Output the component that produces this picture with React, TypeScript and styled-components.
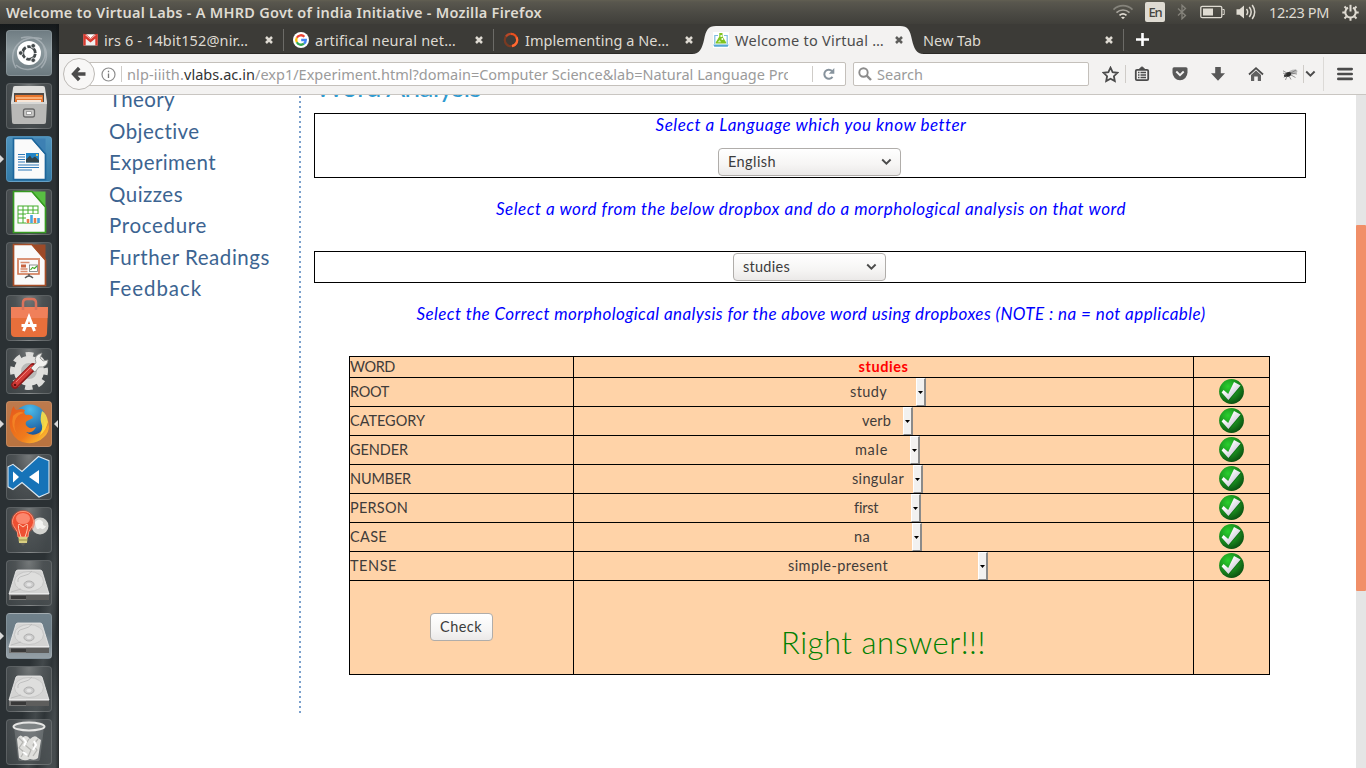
import React, { useLayoutEffect, useRef, useState } from 'react';
import styled, { createGlobalStyle, css } from 'styled-components';

const uiFont = "'Noto Sans', 'Open Sans', sans-serif";
const pageFont = "Lato, 'Open Sans', sans-serif";

const GlobalStyle = createGlobalStyle`
  * { box-sizing: border-box; }
  body { margin: 0; background: #fff; overflow: hidden; }
  svg { display: block; flex: none; }
`;

/* ---------- text that is tracked to a fixed measure ---------- */

const Tracked = styled.span`
  display: inline-block;
  white-space: pre;
  flex: none;
`;

function Fit({ w, children }: { w: number; children: string }) {
  const ref = useRef<HTMLSpanElement>(null);
  const [spacing, setSpacing] = useState(0);
  useLayoutEffect(() => {
    if (ref.current) {
      const natural = ref.current.getBoundingClientRect().width;
      setSpacing((w - natural) / children.length);
    }
  }, [w, children]);
  return (
    <Tracked ref={ref} style={{ letterSpacing: spacing }}>
      {children}
    </Tracked>
  );
}

/* ---------- desktop shell ---------- */

const Desktop = styled.div`
  width: 1366px;
  height: 768px;
  display: grid;
  grid-template: 24px 744px / 59px 1307px;
  overflow: hidden;
`;

const TitleBar = styled.header`
  grid-column: 1 / 3;
  display: flex;
  align-items: center;
  justify-content: space-between;
  padding: 0 7px 0 6px;
  background: linear-gradient(#625f52 0, #59574e 2px, #4a4943 14px, #403f3a 24px);
  color: #dfdbd2;
  font: 600 14.5px/24px ${uiFont};
`;

const Indicators = styled.div`
  display: flex;
  align-items: center;
  height: 24px;
  font-weight: 400;
`;

const LangBadge = styled.span`
  width: 20px;
  height: 20px;
  margin: 0 12px 0 11px;
  border-radius: 2px;
  background: #dfdbd2;
  color: #45443e;
  font: 500 13px/21px ${uiFont};
  display: flex;
  justify-content: center;
`;

const Clock = styled.span`
  margin: 0 13px 0 12px;
`;

/* ---------- launcher ---------- */

const Launcher = styled.nav`
  display: flex;
  flex-direction: column;
  gap: 7px;
  padding: 6px 0 0 0;
  overflow: hidden;
  background:
    linear-gradient(90deg, transparent 55px, rgba(15, 17, 18, 0.55) 59px),
    linear-gradient(#15191b 0, rgba(21, 25, 27, 0) 40px),
    linear-gradient(98deg, rgba(0, 0, 0, 0) 60%, rgba(110, 116, 118, 0.35) 72%, rgba(60, 66, 68, 0.2) 80%, rgba(120, 126, 128, 0.35) 90%) 0 380px / 59px 364px no-repeat,
    #2b3134;
`;

const LauncherSlot = styled.div`
  display: grid;
  grid-template-columns: 6px 46px 7px;
  height: 46px;
  flex: none;
  align-items: center;
`;

const Tile = styled.div<{ $bg?: string }>`
  width: 46px;
  height: 46px;
  border-radius: 4px;
  overflow: hidden;
  grid-column: 2;
  border: 1px solid rgba(255, 255, 255, 0.14);
  background: ${(p) =>
    p.$bg || 'radial-gradient(ellipse at 50% 0, #75797a 0, rgba(85, 90, 92, 0.8) 45%, rgba(76, 82, 84, 0.55) 100%)'};
  display: flex;
  align-items: center;
  justify-content: center;
`;

const Pip = styled.i<{ $side: 'left' | 'right' }>`
  width: 0;
  height: 0;
  border: 4px solid transparent;
  ${(p) =>
    p.$side === 'left'
      ? css`border-left-color: #d8d8d8; border-right-width: 0; grid-column: 1; grid-row: 1;`
      : css`border-right-color: #d8d8d8; border-left-width: 0; grid-column: 3; grid-row: 1; justify-self: end; margin-right: 1px;`}
`;

/* ---------- browser ---------- */

const Browser = styled.main`
  display: grid;
  grid-template-rows: 30px 41px 673px;
  min-width: 0;
`;

const TabStrip = styled.div`
  display: flex;
  background: #3c3b37;
  border-bottom: 1px solid #2b2a27;
  height: 30px;
  padding-left: 15px;
`;

const TabBox = styled.div<{ $active?: boolean; $line?: boolean }>`
  position: relative;
  flex: none;
  width: 210px;
  height: 30px;
  display: flex;
  align-items: center;
  justify-content: space-between;
  padding: 1px 10px 0 9px;
  color: ${(p) => (p.$active ? '#4c4c4c' : '#dedad2')};
  font: 400 14.5px/26px ${uiFont};
  & > * { z-index: 1; }
  ${(p) =>
    p.$line &&
    css`
      &::after {
        content: '';
        position: absolute;
        right: 0;
        top: 5px;
        width: 1px;
        height: 22px;
        background: #6c6b67;
      }
    `}
`;

const TabShape = styled.svg`
  position: absolute;
  left: -12px;
  top: 2px;
  z-index: 0;
`;

const TabTitle = styled.div`
  display: flex;
  align-items: center;
  gap: 6px;
  height: 26px;
`;

const NewTab = styled.div`
  width: 36px;
  padding-top: 2px;
  display: flex;
  align-items: center;
  justify-content: center;
`;

const NavBar = styled.div`
  display: flex;
  align-items: center;
  height: 41px;
  padding-left: 4px;
  background: #f3f2f1;
  border-bottom: 1px solid #c9c6c2;
`;

const BackButton = styled.div`
  width: 32px;
  height: 32px;
  border: 1px solid #bdbab6;
  border-radius: 50%;
  background: #f8f7f6;
  display: flex;
  align-items: center;
  justify-content: center;
  z-index: 1;
  flex: none;
`;

const Field = styled.div<{ $w: number; $pad: number }>`
  width: ${(p) => p.$w}px;
  padding-left: ${(p) => p.$pad}px;
  height: 24px;
  flex: none;
  display: flex;
  align-items: center;
  border: 1px solid #c4c0bb;
  border-radius: 2px;
  background: #fff;
  color: #9b9b9b;
  font: 400 14.5px/22px ${uiFont};
`;

const UrlField = styled(Field)`
  margin-left: -8px;
  margin-right: 7px;
`;

const UrlText = styled.div`
  display: flex;
  width: 661px;
  overflow: hidden;
  b { font-weight: 400; color: #333; }
`;

const Rule = styled.i<{ $h: number; $m: string; $c?: string }>`
  width: 1px;
  height: ${(p) => p.$h}px;
  margin: ${(p) => p.$m};
  background: ${(p) => p.$c || '#cfccc8'};
  flex: none;
`;

const ToolSlot = styled.div<{ $w: number }>`
  width: ${(p) => p.$w}px;
  display: flex;
  justify-content: center;
  flex: none;
`;

/* ---------- page ---------- */

const Page = styled.div`
  display: grid;
  grid-template-columns: 240px 1057px 10px;
  height: 673px;
  overflow: hidden;
  background: #fff;
  font-family: ${pageFont};
`;

const SideNav = styled.aside`
  height: 619px;
  display: flex;
  flex-direction: column;
  padding-left: 50px;
  margin-top: -11px;
  color: #3c6491;
  font-size: 20.5px;
  line-height: 31.5px;
`;

const SideLink = styled.a`
  display: block;
  height: 31.5px;
  flex: none;
`;

const Main = styled.section`
  display: flex;
  flex-direction: column;
  width: 1007px;
  height: 619px;
  padding-left: 15px;
  background: repeating-linear-gradient(#7ba0cc 0, #7ba0cc 2px, transparent 2px, transparent 5px) 0 1px / 2px 619px no-repeat;
`;

const Heading = styled.h1`
  margin: -25px 0 10px 1px;
  height: 33px;
  color: #2f9ad0;
  font-size: 28px;
  font-weight: 400;
  line-height: 33px;
`;

const Panel = styled.div<{ $h: number }>`
  width: 992px;
  height: ${(p) => p.$h}px;
  flex: none;
  display: flex;
  flex-direction: column;
  align-items: center;
  justify-content: flex-end;
  padding: 0 1px 1px 0;
  border: 1px solid #000;
`;

const Prompt = styled.p<{ $m?: string }>`
  margin: ${(p) => p.$m || 0};
  height: 22px;
  flex: none;
  text-align: center;
  color: #0000ff;
  font-size: 17px;
  font-style: italic;
  line-height: 22px;
`;

const Control = styled.div<{ $w: number }>`
  width: ${(p) => p.$w}px;
  height: 28px;
  flex: none;
  display: flex;
  align-items: center;
  justify-content: space-between;
  padding: 0 8px 0 9px;
  border: 1px solid #b0adaa;
  border-radius: 4px;
  background: linear-gradient(#fff, #f6f5f4 60%, #ebe9e8);
  color: #3c3c3c;
  font-size: 14.5px;
  line-height: 26px;
`;

const Sheet = styled.div`
  width: 921px;
  margin: 31px 0 0 35px;
  flex: none;
  display: grid;
  grid-template-columns: 223px 619px 75px;
  grid-template-rows: 20px repeat(7, 28px) 93px;
  gap: 1px;
  padding: 1px;
  background: #000;
  color: #3f3c3a;
  font-size: 14.5px;
  line-height: 20px;
`;

const Cell = styled.div<{ $center?: boolean }>`
  display: flex;
  align-items: center;
  justify-content: ${(p) => (p.$center ? 'center' : 'flex-start')};
  background: #ffd3a8;
`;

const MarkCell = styled(Cell)`
  align-items: flex-start;
  padding: 1px 0 0 25px;
`;

const CheckCell = styled(Cell)`
  padding-bottom: 1px;
`;

const Answer = styled.strong`
  color: #ff0000;
  font-weight: 700;
`;

const FlatSelect = styled.div<{ $w: number; $pad: number }>`
  width: ${(p) => p.$w}px;
  height: 28px;
  display: flex;
  align-items: center;
  justify-content: space-between;
  padding-left: ${(p) => p.$pad}px;
`;

const FlatArrow = styled.span`
  width: 10px;
  height: 28px;
  display: flex;
  align-items: center;
  justify-content: flex-end;
  padding-right: 1px;
  background: #f2f1f0;
  border: 1px solid #fff;
  border-right: 2px solid #8b8a89;
  border-bottom: 1px solid #8b8a89;
`;

const Result = styled.div`
  padding-top: 29px;
  color: #008000;
  font-size: 31px;
  font-weight: 300;
  line-height: 36px;
`;

const ScrollTrack = styled.div`
  background: #e5e5e5;
  padding-top: 130px;
`;

const ScrollThumb = styled.div`
  height: 366px;
  background: #f18f68;
  border-radius: 1px;
`;

/* ---------- small icons ---------- */

const CloseIcon = ({ color }: { color: string }) => (
  <svg width="10" height="10" viewBox="0 0 10 10">
    <path d="M2 2 8 8M8 2 2 8" stroke={color} strokeWidth="2.5" />
  </svg>
);

const Chevron = () => (
  <svg width="11" height="8" viewBox="0 0 11 8">
    <path d="m1.2 1.5 4.2 4.2 4.2-4.2" fill="none" stroke="#4b4b4b" strokeWidth="1.9" />
  </svg>
);

const Tick = () => (
  <svg width="25" height="25" viewBox="0 0 25 25">
    <defs>
      <radialGradient id="ball" cx=".36" cy=".3" r=".75">
        <stop offset="0" stopColor="#2bd02e" />
        <stop offset=".5" stopColor="#1b9420" />
        <stop offset="1" stopColor="#0a4d10" />
      </radialGradient>
      <linearGradient id="silver" x2="1" y2="1">
        <stop offset=".3" stopColor="#fff" />
        <stop offset="1" stopColor="#b0abc4" />
      </linearGradient>
    </defs>
    <circle cx="12.500" cy="12.500" r="12.400" fill="url(#ball)" />
    <path d="m3 14.600 2-2 4.500 3.500L15.600 4.400 22 7.200 10 21.600Z" fill="#0b5e12" opacity=".7" />
    <path d="m2.600 13.400 2-2.300 4.600 4L15 3l6.600 3.600L9.400 21Z" fill="url(#silver)" />
  </svg>
);

const GmailIcon = () => (
  <svg width="15" height="16" viewBox="0 0 15 16">
    <rect x=".5" y="2.5" width="14" height="11" fill="#eee" />
    <path d="M1.5 13.5V4l6 5 6-5v9.5" fill="none" stroke="#d93a2f" strokeWidth="2.4" />
    <path d="M1 2.5h2l4.5 4 4.5-4h2" fill="#fff" stroke="#d93a2f" strokeWidth=".8" />
  </svg>
);

const GoogleIcon = () => (
  <svg width="16" height="16" viewBox="0 0 16 16">
    <circle cx="8" cy="8" r="8" fill="#fff" />
    <g fill="none" strokeWidth="2.3">
      <path d="M11.4 4.7A4.8 4.8 0 0 0 3.8 5.7" stroke="#ea4335" />
      <path d="M3.8 5.7a4.8 4.8 0 0 0 0 4.6" stroke="#fbbc05" />
      <path d="M3.8 10.3a4.8 4.8 0 0 0 7.2 1.4" stroke="#34a853" />
      <path d="M11 11.7A4.6 4.6 0 0 0 12.8 8H8.2" stroke="#4285f4" />
    </g>
  </svg>
);

const SpinnerIcon = () => (
  <svg width="16" height="16" viewBox="0 0 16 16" fill="none" strokeWidth="2.2">
    <circle cx="8" cy="8" r="6.2" stroke="#7a3a22" />
    <path d="M8 1.8a6.2 6.2 0 0 1 1 12.3" stroke="#e9501f" />
    <path d="M3 4.3a6.2 6.2 0 0 1 5-2.5" stroke="#b7492a" />
    <path d="M13.6 5.4A6.2 6.2 0 0 1 9 14.1" stroke="#ff6a33" />
  </svg>
);

const LabIcon = () => (
  <svg width="16" height="16" viewBox="0 0 16 16">
    <rect width="16" height="16" fill="#fff" />
    <path d="M1.800 12V3.500H5M11 3.500h3.200V12" fill="none" stroke="#7dbde0" strokeWidth="1.200" />
    <path d="M6.300 1h3.200v3.500l3.700 6q.3 1-.8 1H3.400q-1 0-.7-1l3.600-6Z" fill="#7fc41f" />
    <circle cx="8.200" cy="4" r=".9" fill="#fff" />
    <circle cx="9.300" cy="7" r="1" fill="#fff" />
    <path d="M4.500 10.300 6.600 8l1.600 2.300Z" fill="#d9efb4" />
    <path d="M.3 12.500h15.400l-1 2.300H1.300Z" fill="#55a7d3" />
  </svg>
);

const WifiIcon = () => (
  <svg width="22" height="18" viewBox="0 0 22 18" fill="none" strokeWidth="1.7">
    <path d="M1.5 6.6C7 1.4 15 1.4 20.500 6.600" stroke="#85837b" />
    <path d="M4.500 9.600c3.800-3.500 9.200-3.500 13 0" stroke="#a9a69e" />
    <path d="M7.500 12.400c2.200-1.900 4.800-1.900 7 0" stroke="#dfdbd2" />
    <path d="M9 14.300 11 16.300l2-2c-1.200-.8-2.800-.8-4 0Z" fill="#dfdbd2" stroke="none" />
  </svg>
);

const BluetoothIcon = () => (
  <svg width="10" height="16" viewBox="0 0 10 16">
    <path d="m1 4.500 7.500 7L5 14.800V1.200L8.500 4.500 1 11.500" fill="none" stroke="#85837b" strokeWidth="1.300" />
  </svg>
);

const BatteryIcon = () => (
  <svg width="25" height="14" viewBox="0 0 25 14">
    <rect x=".8" y="1.300" width="21" height="11.400" rx="1.500" fill="none" stroke="#dfdbd2" strokeWidth="1.300" />
    <path d="M22.500 4.500h1.700v5h-1.700" fill="none" stroke="#dfdbd2" />
    <rect x="3" y="3.500" width="10" height="7" fill="#dfdbd2" />
  </svg>
);

const VolumeIcon = () => (
  <svg width="21" height="18" viewBox="0 0 21 18">
    <path d="M.5 6.200H3.500L8 2.500v13L3.500 11.800H.500Z" fill="#dfdbd2" />
    <g fill="none" stroke="#dfdbd2" strokeWidth="1.500">
      <path d="M10.500 6q2.400 3 0 6" />
      <path d="M13.300 4q3.800 5 0 10" />
      <path d="M16.200 2q5 7 0 14" />
    </g>
  </svg>
);

const GearIcon = () => (
  <svg width="17" height="17" viewBox="0 0 17 17" fill="none" stroke="#dfdbd2">
    <path d="M6 3.700A5.200 5.200 0 1 0 11 3.700" strokeWidth="2" />
    <path d="M8.500.8v6.700" strokeWidth="2" />
    <path d="M2.500 2.500 4.600 4.600M14.500 2.500 12.400 4.600M.3 8.500h3M13.700 8.500h3M2.500 14.500l2.100-2.100M14.500 14.500l-2.100-2.100M8.500 13.700v3" strokeWidth="2" />
  </svg>
);

const BackIcon = () => (
  <svg width="16" height="16" viewBox="0 0 16 16">
    <path d="M8.200 2 2.600 8l5.600 6M3.500 8h11" fill="none" stroke="#4b4b4b" strokeWidth="3.500" />
  </svg>
);

const InfoIcon = () => (
  <svg width="15" height="15" viewBox="0 0 15 15">
    <circle cx="7.500" cy="7.500" r="6.500" fill="none" stroke="#8d8d8d" strokeWidth="1.200" />
    <path d="M7.500 6.500v4.500M7.500 3.800v1.500" stroke="#777" strokeWidth="1.300" />
  </svg>
);

const ReloadIcon = () => (
  <svg width="14" height="14" viewBox="0 0 14 14">
    <path d="M10.500 9.800A4.500 4.500 0 1 1 10 4" fill="none" stroke="#87939d" strokeWidth="2" />
    <path d="M12.300 1v5.800H6.800Z" fill="#87939d" />
  </svg>
);

const SearchIcon = () => (
  <svg width="14" height="14" viewBox="0 0 14 14" fill="none" stroke="#8c8c8c">
    <circle cx="5.500" cy="5.500" r="4.200" strokeWidth="1.900" />
    <path d="m8.700 8.700 4.300 4.300" strokeWidth="2.400" />
  </svg>
);

const StarIcon = () => (
  <svg width="17" height="17" viewBox="0 0 17 17">
    <path d="m8.500 1.700 2.100 4.500 4.900.6-3.600 3.400.9 4.900-4.300-2.400-4.300 2.400.9-4.900L1.500 6.800l4.900-.6Z" fill="none" stroke="#4b4b4b" strokeWidth="1.800" />
  </svg>
);

const ListIcon = () => (
  <svg width="16" height="16" viewBox="0 0 16 16">
    <path d="M5.500 3.500V2.800L8 .800l2.500 2v.7" fill="#4b4b4b" stroke="#4b4b4b" />
    <rect x="1.800" y="3.800" width="12.400" height="10.400" rx="1.200" fill="#f3f2f1" stroke="#4b4b4b" strokeWidth="1.800" />
    <path d="M4 6.500h1.500M4 9h1.500M4 11.500h1.500M6.500 6.500H12M6.500 9H12M6.500 11.500H12" stroke="#4b4b4b" strokeWidth="1.400" />
  </svg>
);

const PocketIcon = () => (
  <svg width="16" height="16" viewBox="0 0 16 16">
    <path d="M.5 2.800Q.5 1.200 2 1.200h12q1.500 0 1.500 1.600v3.700A7.500 7.800 0 0 1 .5 6.500Z" fill="#585858" />
    <path d="m4.300 5.500 3.700 3.600 3.700-3.600" fill="none" stroke="#f3f2f1" strokeWidth="1.900" />
  </svg>
);

const DownloadIcon = () => (
  <svg width="16" height="16" viewBox="0 0 16 16">
    <path d="M5.200 1h5.600v6.200H15L8 14.800 1 7.200h4.200Z" fill="#585858" />
  </svg>
);

const HomeIcon = () => (
  <svg width="16" height="16" viewBox="0 0 16 16">
    <path d="m1 8.500 7-6.300 7 6.300" fill="none" stroke="#4b4b4b" strokeWidth="1.800" />
    <path d="M3 9 8 4.600 13 9v6H9.800v-4.500H6.200V15H3Z" fill="#616161" />
  </svg>
);

const FlyIcon = () => (
  <svg width="17" height="13" viewBox="0 0 17 13">
    <ellipse cx="11" cy="4" rx="4.500" ry="2.300" fill="#b5b5b5" transform="rotate(-15 11 4)" />
    <path d="m8 5.500 6-3.500M8 5l7 1" stroke="#777" strokeWidth=".8" />
    <ellipse cx="6" cy="6.500" rx="3.300" ry="2.300" fill="#2d2d2d" transform="rotate(-20 6 6.500)" />
    <path d="M1 5l3 1.500L2 9.500M1 2.800 5 5M5 8l-1.500 4M7 8l2 3.500M9 7l4.500 2.500" fill="none" stroke="#888" strokeWidth=".9" />
    <circle cx="3.200" cy="7.700" r="1.300" fill="#3f3f3f" />
  </svg>
);

const MenuIcon = () => (
  <svg width="16" height="14" viewBox="0 0 16 14">
    <path d="M1.300 2.100h13.400M1.300 7h13.400M1.300 11.900h13.400" stroke="#4b4b4b" strokeWidth="2.600" strokeLinecap="round" />
  </svg>
);

/* ---------- launcher artwork ---------- */

const Art = ({ children }: { children: React.ReactNode }) => (
  <svg width="46" height="46" viewBox="0 0 46 46">
    {children}
  </svg>
);

const DashArt = () => (
  <Art>
    <path d="M10 38C0 22 14 3 36 9M15 8C34 2 49 23 35 38M37 15c9 18-13 32-27 20" fill="none" stroke="#bac2c6" strokeWidth="1.500" opacity=".6" />
    <circle cx="23" cy="23" r="12" fill="#fff" />
    <circle cx="23" cy="23" r="6.300" fill="none" stroke="#444a4c" strokeWidth="2.800" strokeDasharray="11.600 1.600" strokeDashoffset="-.8" />
    <g fill="#444a4c" stroke="#fff" strokeWidth=".8">
      <circle cx="14.700" cy="23" r="2.300" />
      <circle cx="27.200" cy="15.800" r="2.300" />
      <circle cx="27.200" cy="30.200" r="2.300" />
    </g>
  </Art>
);

const FilesArt = () => (
  <Art>
    <path d="M7 5q0-2 2-2h28q2 0 2 2l2 14H5Z" fill="#dededc" />
    <path d="M8 10h30v10H8Z" fill="#514b47" />
    <path d="M9 13q0-1 1-1h26q1 0 1 1v7H9Z" fill="#e6752d" />
    <path d="M10 15h26" stroke="#ffc38f" strokeWidth="1.500" />
    <path d="M11 17h24v2H11Z" fill="#f7e6d8" />
    <path d="M5 19h36l-1 20q0 2-2 2H8q-2 0-2-2Z" fill="#b9b9b7" />
    <path d="M5 19h36v2H5Z" fill="#d8d8d6" />
    <rect x="17.500" y="26" width="11" height="8" rx="2" fill="#c7c7c5" stroke="#696969" strokeWidth="1.300" />
    <rect x="20.500" y="28.700" width="5" height="2.800" fill="#fafafa" stroke="#777" strokeWidth=".6" />
  </Art>
);

const DocShape = ({ color, fold }: { color: string; fold: string }) => (
  <>
    <path d="M7.500 2.500H26L39.500 18v25.500h-32Z" fill="#fafafa" stroke={color} strokeWidth="1.700" />
    <path d="M26 2.500h13.500V18Z" fill={fold} />
    <path d="M26 2.500 39.500 18" stroke={color} strokeWidth="1.200" />
  </>
);

const WriterArt = () => (
  <Art>
    <DocShape color="#1d669b" fold="#3d80b3" />
    <path d="M12 18.500h7M12 21h7M12 23.500h7M12 26h7M12 29h21M12 31.500h21M12 34h14" stroke="#2f79b7" strokeWidth="1.200" />
    <rect x="20" y="17" width="13" height="9.500" fill="#2384c6" />
    <path d="M20 26.500v-3l4-4 2 3 3-2 4 4v2Z" fill="#34444a" />
    <circle cx="31" cy="19" r="1.100" fill="#ffd65c" />
  </Art>
);

const CalcArt = () => (
  <Art>
    <DocShape color="#369a20" fold="#58bf42" />
    <rect x="12" y="17" width="20" height="17" fill="#fff" stroke="#43ac2a" />
    <path d="M12 21h20M12 25h20M12 29h20M17 17v17M22 17v17M27 17v17" stroke="#43ac2a" />
    <rect x="20" y="25" width="14" height="9" fill="#fff" />
    <path d="M22 34v-4M29 34v-5" stroke="#e67b48" strokeWidth="2.600" />
    <path d="M25.500 34v-8M32.500 34v-5" stroke="#46a5e2" strokeWidth="2.600" />
  </Art>
);

const ImpressArt = () => (
  <Art>
    <DocShape color="#a64d26" fold="#9c4a28" />
    <path d="M11 17h23M12 18v14h21V18" fill="none" stroke="#d0724b" strokeWidth="1.600" />
    <path d="M14.500 20.500h9M14.500 27h7M14.500 29.500h7" stroke="#d88d6f" strokeWidth="1.300" />
    <path d="M15 24h5" stroke="#c86440" strokeWidth="3" />
    <rect x="23.500" y="23" width="8" height="6.500" fill="#fff" stroke="#777" strokeWidth=".8" />
    <path d="m24.500 28 2-2.500 2 1 2.500-2.500" fill="none" stroke="#43ac2a" strokeWidth="1.200" />
    <path d="M23 32v2M19 36q4-4 8 0" fill="none" stroke="#555" strokeWidth="1.500" />
  </Art>
);

const StoreArt = () => (
  <Art>
    <path d="M5 12h37l-1 26q0 4-4 4H9q-4 0-4-4Z" fill="#e86f3b" />
    <path d="M5 12h37l-.5 11H5Z" fill="#f0805a" />
    <path d="M17 15V8q0-4 4-4h5q4 0 4 4v7" fill="none" stroke="#d9735c" strokeWidth="2.500" />
    <path d="m17.500 36 5.500-14 5.500 14" fill="none" stroke="#fff" strokeWidth="3" />
    <path d="M15.500 30.500h15" stroke="#fff" strokeWidth="3" />
  </Art>
);

const SettingsArt = () => (
  <Art>
    <circle cx="23" cy="23" r="16.500" fill="none" stroke="#dcdcda" strokeWidth="5" strokeDasharray="7.500 5.460" strokeDashoffset="3.700" />
    <circle cx="23" cy="23" r="11.500" fill="#b9bab9" stroke="#e0e0de" strokeWidth="7" />
    <path d="M9 37 27 19" stroke="#8e1a1a" strokeWidth="7.500" strokeLinecap="round" />
    <path d="M9 36.500 26 19.500" stroke="#d33c38" strokeWidth="5" strokeLinecap="round" />
    <path d="M10 34 25 19" stroke="#ed8079" strokeWidth="1" />
    <path d="m25 20 5-5q-3-8 6-10l-2 5 3 3 5-1q-1 8-9 7l-4 5Z" fill="#f1f1ef" stroke="#8b8d8c" strokeWidth=".8" />
    <circle cx="9" cy="37" r="1.300" fill="#5f1212" />
  </Art>
);

const FirefoxArt = () => (
  <Art>
    <defs>
      <linearGradient id="fox" x2="1" y2="1">
        <stop offset="0" stopColor="#e5581c" />
        <stop offset=".6" stopColor="#f07b1c" />
        <stop offset="1" stopColor="#ffd33a" />
      </linearGradient>
      <radialGradient id="globe" cx=".5" cy=".15" r=".9">
        <stop offset="0" stopColor="#4bbbea" />
        <stop offset="1" stopColor="#12448b" />
      </radialGradient>
    </defs>
    <circle cx="24" cy="20" r="16.500" fill="url(#globe)" />
    <path d="M5 12q0-4 3-7 0 3 3 4 4-2 8 0-2 3 1 5 6-1 7 3l-6 3q-2 1-1 4 3 5 10 2-3 7-10 5 6 5 13 1 7-5 5-14 3 4 2 9 3-3 1-10 5 12-3 19-7 7-17 6Q10 41 5 30 2 21 5 12Z" fill="url(#fox)" />
    <path d="M36 10q5 3 6 11-2 9-9 14 5-7 2-14-1-4 1-11Z" fill="#ffdf42" opacity=".9" />
    <path d="M7 15q6-6 11-3-7 1-9 8-2 8 3 14-8-8-5-19Z" fill="#f58a27" opacity=".8" />
  </Art>
);

const CodeArt = () => (
  <Art>
    <path d="M32.500 2.500 43 6.700v32L33 43 16 28.500 7 35.500l-5-2.700v-20L7 10.300l9 7.200Z" fill="#1673b8" stroke="#dce8f1" strokeWidth="1.100" />
    <path d="M33 16v14l-10-7Z" fill="#fff" />
    <path d="M7 17.500v11l6-5.500Z" fill="#fff" />
  </Art>
);

const LampArt = () => (
  <Art>
    <circle cx="34" cy="19" r="8.500" fill="#d3d3cf" />
    <path d="M29 15q4-5 8 0-1 4 3 4-2 5-6 2-4 4-5-6Z" fill="#f3f3f0" />
    <circle cx="17" cy="15" r="12" fill="#f4492d" opacity=".45" />
    <path d="M17 4.500A10 10 0 0 1 25 21q-3 3-3 9H12q0-6-3-9A10 10 0 0 1 17 4.500Z" fill="#ee4f32" stroke="#ff9475" strokeWidth="1" />
    <path d="M15 30q-4-11-2-13l4 3 4-3q2 2-2 13" fill="none" stroke="#ffc8ae" />
    <ellipse cx="17" cy="11.500" rx="7" ry="5.500" fill="#ff9a83" opacity=".75" />
    <path d="M12.500 30h9l-.5 6h-8Z" fill="#d9cf82" />
    <path d="M12.500 33h9" stroke="#988f46" />
    <path d="M14 36h6l-3 3Z" fill="#5c5c58" />
  </Art>
);

const DriveArt = () => (
  <Art>
    <path d="M10 11q1-1 2-1h22q1 0 2 1l7 23H3Z" fill="#d4d4d3" stroke="#eee" strokeWidth=".8" />
    <path d="M3 34h40v6H3Z" fill="#777776" />
    <path d="M5 35.500h15v3.500H5Z" fill="#393939" />
    <path d="M20 34h23v6H20Z" fill="#5d5d5c" />
    <path d="M3 34h40" stroke="#f6f6f6" />
    <ellipse cx="23" cy="21.500" rx="14.500" ry="10" fill="#dededd" stroke="#bebebe" strokeWidth=".7" />
    <ellipse cx="23" cy="24.500" rx="5" ry="3.500" fill="#ccc" stroke="#a5a5a5" strokeWidth=".8" />
    <ellipse cx="23" cy="24.500" rx="2.500" ry="1.700" fill="#e4e4e4" />
    <path d="M26 11q-3 4-9 5t-5 6M5 32l10-3" fill="none" stroke="#b8b8b8" strokeWidth=".8" />
  </Art>
);

const TrashArt = () => (
  <Art>
    <path d="M8 8h30l-4 32q0 2-3 2H15q-3 0-3-2Z" fill="#8a8f90" opacity=".45" />
    <path d="M11 20q3-6 6-2 4-3 7 2 5-5 8-1l3 2-3 18q-3 3-8 1-6 3-11-1Z" fill="#dededb" />
    <path d="m13 19 4 4-4 6 5 4-3 5M23 20l-4 6 6 5-3 7M32 20l-5 6 4 5-4 6" fill="none" stroke="#b4b4b1" strokeWidth="1.200" />
    <path d="m17 19 3 4-2 4M28 22l2 4-3 5M17 33l4 3" fill="none" stroke="#fff" strokeWidth="2" />
    <ellipse cx="23" cy="7.500" rx="15.500" ry="4" fill="#7e8384" stroke="#e6e6e4" strokeWidth="2" />
  </Art>
);

const launcherItems: { art: React.FC; bg?: string; left?: boolean; right?: boolean }[] = [
  { art: DashArt, bg: 'linear-gradient(#707d83, #8c999e 45%, #6c7a80)' },
  { art: FilesArt },
  { art: WriterArt, bg: 'linear-gradient(#4d92bd, #327aa7)', left: true },
  { art: CalcArt },
  { art: ImpressArt },
  { art: StoreArt },
  { art: SettingsArt },
  { art: FirefoxArt, bg: 'linear-gradient(#bd7a4d, #b9733f)', left: true, right: true },
  { art: CodeArt },
  { art: LampArt },
  { art: DriveArt },
  { art: DriveArt, bg: 'linear-gradient(#70818b, #6c7c86 45%, #95a0a6)', left: true },
  { art: DriveArt },
  { art: TrashArt },
];

/* ---------- data ---------- */

const tabs = [
  { icon: GmailIcon, title: 'irs 6 - 14bit152@nir…', w: 144, line: true },
  { icon: GoogleIcon, title: 'artifical neural net…', w: 141, line: true },
  { icon: SpinnerIcon, title: 'Implementing a Ne…', w: 144 },
  { icon: LabIcon, title: 'Welcome to Virtual …', w: 149, active: true },
  { title: 'New Tab', w: 58, line: true },
];

const links: [string, number][] = [
  ['Theory', 66],
  ['Objective', 91],
  ['Experiment', 107],
  ['Quizzes', 74],
  ['Procedure', 98],
  ['Further Readings', 161],
  ['Feedback', 93],
];

const rows = [
  { name: 'ROOT', nw: 39, value: 'study', vw: 37, w: 85, pad: 9 },
  { name: 'CATEGORY', nw: 75, value: 'verb', vw: 29, w: 59, pad: 8 },
  { name: 'GENDER', nw: 58, value: 'male', vw: 33, w: 73, pad: 8 },
  { name: 'NUMBER', nw: 61, value: 'singular', vw: 52, w: 79, pad: 8 },
  { name: 'PERSON', nw: 58, value: 'first', vw: 24, w: 75, pad: 8 },
  { name: 'CASE', nw: 37, value: 'na', vw: 16, w: 77, pad: 9 },
  { name: 'TENSE', nw: 47, value: 'simple-present', vw: 100, w: 209, pad: 9 },
];

export default function App() {
  return (
    <Desktop>
      <GlobalStyle />
      <TitleBar>
        <Fit w={536}>Welcome to Virtual Labs - A MHRD Govt of india Initiative - Mozilla Firefox</Fit>
        <Indicators>
          <WifiIcon />
          <LangBadge>
            <Fit w={13}>En</Fit>
          </LangBadge>
          <BluetoothIcon />
          <Rule $h={1} $m="0 6px" $c="transparent" />
          <BatteryIcon />
          <Rule $h={1} $m="0 5px" $c="transparent" />
          <VolumeIcon />
          <Clock>
            <Fit w={60}>12:23 PM</Fit>
          </Clock>
          <GearIcon />
        </Indicators>
      </TitleBar>

      <Launcher>
        {launcherItems.map(({ art: Icon, bg, left, right }, i) => (
          <LauncherSlot key={i}>
            {left && <Pip $side="left" />}
            <Tile $bg={bg}>
              <Icon />
            </Tile>
            {right && <Pip $side="right" />}
          </LauncherSlot>
        ))}
      </Launcher>

      <Browser>
        <TabStrip>
          {tabs.map(({ icon: Icon, title, w, line, active }) => (
            <TabBox key={title} $active={active} $line={line}>
              {active && (
                <TabShape width="232" height="28" viewBox="0 0 232 28">
                  <path d="M0 28C8 28 10 22 12 14 14 4 16 0 24 0H208C216 0 218 4 220 14 222 22 224 28 232 28Z" fill="#f3f2f1" />
                </TabShape>
              )}
              <TabTitle>
                {Icon && <Icon />}
                <Fit w={w}>{title}</Fit>
              </TabTitle>
              <CloseIcon color={active ? '#5d5d5b' : '#dedad2'} />
            </TabBox>
          ))}
          <NewTab>
            <svg width="13" height="13" viewBox="0 0 13 13">
              <path d="M6.500 0v13M0 6.500h13" stroke="#fff" strokeWidth="2.600" />
            </svg>
          </NewTab>
        </TabStrip>

        <NavBar>
          <BackButton>
            <BackIcon />
          </BackButton>
          <UrlField $w={759} $pad={13}>
            <InfoIcon />
            <Rule $h={16} $m="0 5px 0 5px" />
            <UrlText>
              <Fit w={57}>nlp-iiith.</Fit>
              <b>
                <Fit w={71}>vlabs.ac.in</Fit>
              </b>
              <Fit w={537}>/exp1/Experiment.html?domain=Computer Science&lab=Natural Language Pro</Fit>
            </UrlText>
            <Rule $h={16} $m="0 9px 0 24px" />
            <ReloadIcon />
          </UrlField>
          <Field $w={236} $pad={4}>
            <SearchIcon />
            <Rule $h={1} $m="0 2px 0 2px" $c="transparent" />
            <Fit w={46}>Search</Fit>
          </Field>
          <ToolSlot $w={43}><StarIcon /></ToolSlot>
          <Rule $h={18} $m="0 0 0 -7px" />
          <ToolSlot $w={31}><ListIcon /></ToolSlot>
          <ToolSlot $w={45}><PocketIcon /></ToolSlot>
          <ToolSlot $w={31}><DownloadIcon /></ToolSlot>
          <ToolSlot $w={45}><HomeIcon /></ToolSlot>
          <ToolSlot $w={25}><FlyIcon /></ToolSlot>
          <Rule $h={18} $m="0 1px 0 0" />
          <Chevron />
          <Rule $h={34} $m="0 0 0 7px" $c="#dcdad7" />
          <ToolSlot $w={42}><MenuIcon /></ToolSlot>
        </NavBar>

        <Page>
          <SideNav>
            {links.map(([label, w]) => (
              <SideLink key={label}>
                <Fit w={w}>{label}</Fit>
              </SideLink>
            ))}
          </SideNav>

          <Main>
            <Heading>
              <Fit w={166}>Word Analysis</Fit>
            </Heading>
            <Panel $h={65}>
              <Prompt $m="0 0 12px 3px">
                <Fit w={310}>Select a Language which you know better</Fit>
              </Prompt>
              <Control $w={183}>
                <Fit w={48}>English</Fit>
                <Chevron />
              </Control>
            </Panel>
            <Prompt $m="20px 0 31px 2px">
              <Fit w={630}>Select a word from the below dropbox and do a morphological analysis on that word</Fit>
            </Prompt>
            <Panel $h={32}>
              <Control $w={153}>
                <Fit w={47}>studies</Fit>
                <Chevron />
              </Control>
            </Panel>
            <Prompt $m="20px 0 0 2px">
              <Fit w={789}>Select the Correct morphological analysis for the above word using dropboxes (NOTE : na = not applicable)</Fit>
            </Prompt>
            <Sheet>
              <Cell>
                <Fit w={45}>WORD</Fit>
              </Cell>
              <Cell $center>
                <Answer>
                  <Fit w={50}>studies</Fit>
                </Answer>
              </Cell>
              <Cell />
              {rows.map((r) => (
                <React.Fragment key={r.name}>
                  <Cell>
                    <Fit w={r.nw}>{r.name}</Fit>
                  </Cell>
                  <Cell $center>
                    <FlatSelect $w={r.w} $pad={r.pad}>
                      <Fit w={r.vw}>{r.value}</Fit>
                      <FlatArrow>
                        <svg width="5" height="3" viewBox="0 0 5 3">
                          <path d="M0 0h5L2.500 3Z" />
                        </svg>
                      </FlatArrow>
                    </FlatSelect>
                  </Cell>
                  <MarkCell>
                    <Tick />
                  </MarkCell>
                </React.Fragment>
              ))}
              <CheckCell $center>
                <Control $w={63}>
                  <Fit w={42}>Check</Fit>
                </Control>
              </CheckCell>
              <Cell $center>
                <Result>
                  <Fit w={205}>Right answer!!!</Fit>
                </Result>
              </Cell>
              <Cell />
            </Sheet>
          </Main>

          <ScrollTrack>
            <ScrollThumb />
          </ScrollTrack>
        </Page>
      </Browser>
    </Desktop>
  );
}
